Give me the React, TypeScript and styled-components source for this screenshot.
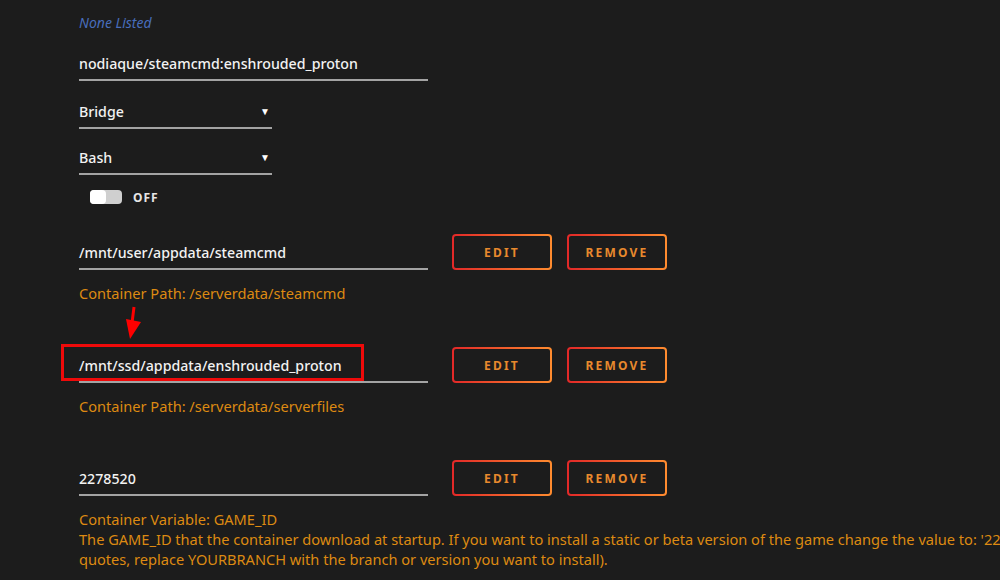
import React from "react";
import styled, { createGlobalStyle } from "styled-components";

const GlobalStyle = createGlobalStyle`
  html, body {
    margin: 0;
    padding: 0;
    background: #1c1c1c;
    overflow: hidden;
  }
  body {
    font-family: "Noto Sans", "Open Sans", sans-serif;
    color: #f2f2f2;
  }
`;

const Page = styled.div`
  position: relative;
  width: 1000px;
  height: 580px;
  padding-left: 79px;
  box-sizing: border-box;
  display: flex;
  flex-direction: column;
  overflow: hidden;
`;

const Spacer = styled.div<{ $h: number }>`
  height: ${(p) => p.$h}px;
  flex: none;
`;

const Hint = styled.div`
  font-size: 14px;
  line-height: 20px;
  font-style: italic;
  color: #486dba;
`;

const Field = styled.div<{ $w: number }>`
  position: relative;
  width: ${(p) => p.$w}px;
  height: 32px;
  display: flex;
  align-items: center;
  justify-content: space-between;
  border-bottom: 2px solid #a3a3a3;
  font-size: 14.2px;
  font-weight: 500;
  color: #f2f2f2;
  flex: none;
`;

const Caret = styled.span`
  font-size: 10px;
  margin-right: 2px;
  color: #fff;
`;

const ToggleRow = styled.div`
  display: flex;
  align-items: center;
  gap: 11px;
  height: 20px;
  padding-left: 11px;
  margin-top: -1px;
`;

const Track = styled.div`
  width: 32px;
  height: 14px;
  border-radius: 4px;
  background: #cfcfcf;
  display: flex;
  align-items: center;
`;

const Knob = styled.div`
  width: 16px;
  height: 14px;
  border-radius: 4px;
  background: #fff;
`;

const ToggleLabel = styled.span`
  font-size: 12px;
  font-weight: 700;
  letter-spacing: 1px;
  color: #e6e6e6;
`;

const Row = styled.div`
  display: flex;
  align-items: flex-start;
  gap: 16px;
`;

const Buttons = styled.div`
  display: flex;
  gap: 15px;
  margin-left: 8px;
  margin-top: -2px;
`;

const GradientButton = styled.button`
  width: 100px;
  height: 36px;
  box-sizing: border-box;
  border: 2px solid transparent;
  border-radius: 4px;
  background:
    linear-gradient(#1c1c1c, #1c1c1c) padding-box,
    linear-gradient(90deg, #e22828, #ff8c2f) border-box;
  color: #e8892d;
  font-family: "Noto Sans", sans-serif;
  font-size: 12px;
  font-weight: 700;
  letter-spacing: 2.2px;
  text-transform: uppercase;
  padding: 0;
  cursor: pointer;
`;

const Note = styled.div`
  font-size: 14.6px;
  line-height: 20px;
  color: #dd8a12;
  white-space: nowrap;
`;

const Highlight = styled.div`
  position: absolute;
  left: -18px;
  top: -5px;
  width: 303px;
  height: 37px;
  box-sizing: border-box;
  border: 3px solid #ee0a0a;
  pointer-events: none;
`;

const Arrow = styled.svg`
  position: absolute;
  left: 120px;
  top: 305px;
`;

type MountRowProps = {
  value: string;
  highlight?: boolean;
};

const MountRow = ({ value, highlight }: MountRowProps) => (
  <Row>
    <Field $w={349}>
      {value}
      {highlight && <Highlight />}
    </Field>
    <Buttons>
      <GradientButton>Edit</GradientButton>
      <GradientButton>Remove</GradientButton>
    </Buttons>
  </Row>
);

export default function App() {
  return (
    <>
      <GlobalStyle />
      <Page>
        <Spacer $h={13} />
        <Hint>None Listed</Hint>
        <Spacer $h={14} />
        <Field $w={349}>nodiaque/steamcmd:enshrouded_proton</Field>
        <Spacer $h={14} />
        <Field $w={193}>
          Bridge
          <Caret>▼</Caret>
        </Field>
        <Spacer $h={12} />
        <Field $w={193}>
          Bash
          <Caret>▼</Caret>
        </Field>
        <Spacer $h={13} />
        <ToggleRow>
          <Track>
            <Knob />
          </Track>
          <ToggleLabel>OFF</ToggleLabel>
        </ToggleRow>
        <Spacer $h={29} />
        <MountRow value="/mnt/user/appdata/steamcmd" />
        <Spacer $h={13} />
        <Note>Container Path: /serverdata/steamcmd</Note>
        <Spacer $h={46} />
        <MountRow value="/mnt/ssd/appdata/enshrouded_proton" highlight />
        <Spacer $h={13} />
        <Note>Container Path: /serverdata/serverfiles</Note>
        <Spacer $h={46} />
        <MountRow value="2278520" />
        <Spacer $h={13} />
        <Note>Container Variable: GAME_ID</Note>
        <Note>
          The GAME_ID that the container download at startup. If you want to install a static or beta version of the game change the value to: '2278520 -beta YOURBRANCH' (without
          <br />
          quotes, replace YOURBRANCH with the branch or version you want to install).
        </Note>
        <Arrow width="24" height="38" viewBox="0 0 24 38">
          <line x1="14" y1="2" x2="12" y2="18" stroke="#ff0000" strokeWidth="3" />
          <polygon points="6,14 21,17 10,34" fill="#ff0000" />
        </Arrow>
      </Page>
    </>
  );
}
